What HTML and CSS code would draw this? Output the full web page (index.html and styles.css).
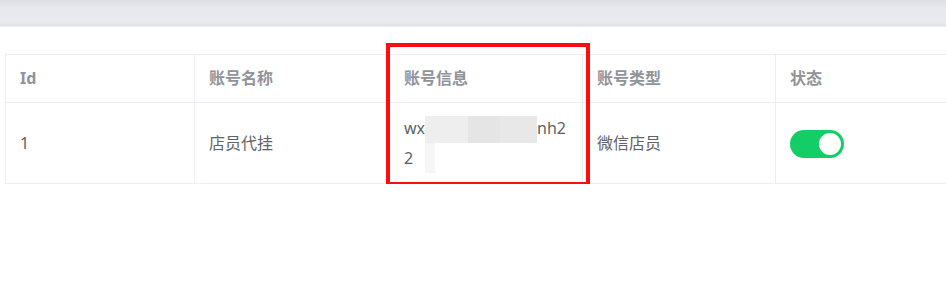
FILE: index.html
```html
<!DOCTYPE html>
<html lang="zh-CN">
<head>
    <meta charset="UTF-8">
    <meta name="viewport" content="width=device-width, initial-scale=1.0">
    <title>账号管理</title>
    <link rel="stylesheet" href="styles.css">
</head>
<body>
    <div class="top-bar"></div>
    <div class="panel">
        <table class="account-table">
            <colgroup>
                <col class="col-id">
                <col class="col-name">
                <col class="col-info">
                <col class="col-type">
                <col class="col-state">
            </colgroup>
            <thead>
                <tr>
                    <th>Id</th>
                    <th>账号名称</th>
                    <th>账号信息</th>
                    <th>账号类型</th>
                    <th>状态</th>
                </tr>
            </thead>
            <tbody>
                <tr>
                    <td>1</td>
                    <td>店员代挂</td>
                    <td class="info-cell">wx<span class="mosaic"></span>nh2<br>2</td>
                    <td>微信店员</td>
                    <td><span class="switch is-on"><span class="switch-knob"></span></span></td>
                </tr>
            </tbody>
        </table>
        <!-- highlight around the account info column -->
        <div class="mark-box"></div>
    </div>
</body>
</html>
```

FILE: styles.css
```css
html, body {
    margin: 0;
    padding: 0;
    background: #fff;
    overflow: hidden;
}
body {
    font-family: "Noto Sans", "Noto Sans CJK SC", sans-serif;
    -webkit-font-smoothing: antialiased;
}
.top-bar {
    height: 26px;
    background: linear-gradient(180deg, #dedfe5 0%, #e7e9ee 30%, #e8eaef 85%, #e1e2e8 100%);
    border-bottom: 1px solid #eceef3;
}
.panel {
    position: relative;
    padding: 27px 0 0 5px;
}
.account-table {
    width: 980px;
    table-layout: fixed;
    border-collapse: collapse;
    font-size: 16px;
}
.col-id { width: 189px; }
.col-name { width: 195px; }
.col-info { width: 193px; }
.col-type { width: 193px; }
.col-state { width: 210px; }
.account-table th,
.account-table td {
    border: 1px solid #ebeef5;
    text-align: left;
    vertical-align: middle;
    padding: 0 14px;
}
.account-table th {
    height: 47px;
    line-height: 23px;
    color: #909399;
    font-weight: 700;
}
.account-table td {
    height: 60px;
    padding-top: 10px;
    padding-bottom: 10px;
    line-height: 30px;
    color: #606266;
}
.info-cell {
    position: relative;
}
.mosaic {
    position: relative;
    display: inline-block;
    width: 112px;
    height: 27px;
    vertical-align: middle;
    background: linear-gradient(90deg, #eeeeee 0, #eeeeee 43px, #e5e5e5 43px, #e5e5e5 75px, #e8e8e8 75px);
}
.mosaic::after {
    content: "";
    position: absolute;
    left: 0;
    top: 27px;
    width: 10px;
    height: 30px;
    background: #f6f6f6;
}
.switch {
    display: inline-block;
    position: relative;
    width: 54px;
    height: 28px;
    border-radius: 14px;
    background: #dcdfe6;
    vertical-align: middle;
}
.switch.is-on {
    background: #13ce66;
}
.switch-knob {
    position: absolute;
    top: 3px;
    left: 3px;
    width: 22px;
    height: 22px;
    border-radius: 50%;
    background: #fff;
}
.switch.is-on .switch-knob {
    left: 29px;
}
.mark-box {
    position: absolute;
    left: 386px;
    top: 16px;
    width: 196px;
    height: 135px;
    border: 4px solid #ff0d0d;
}
```
